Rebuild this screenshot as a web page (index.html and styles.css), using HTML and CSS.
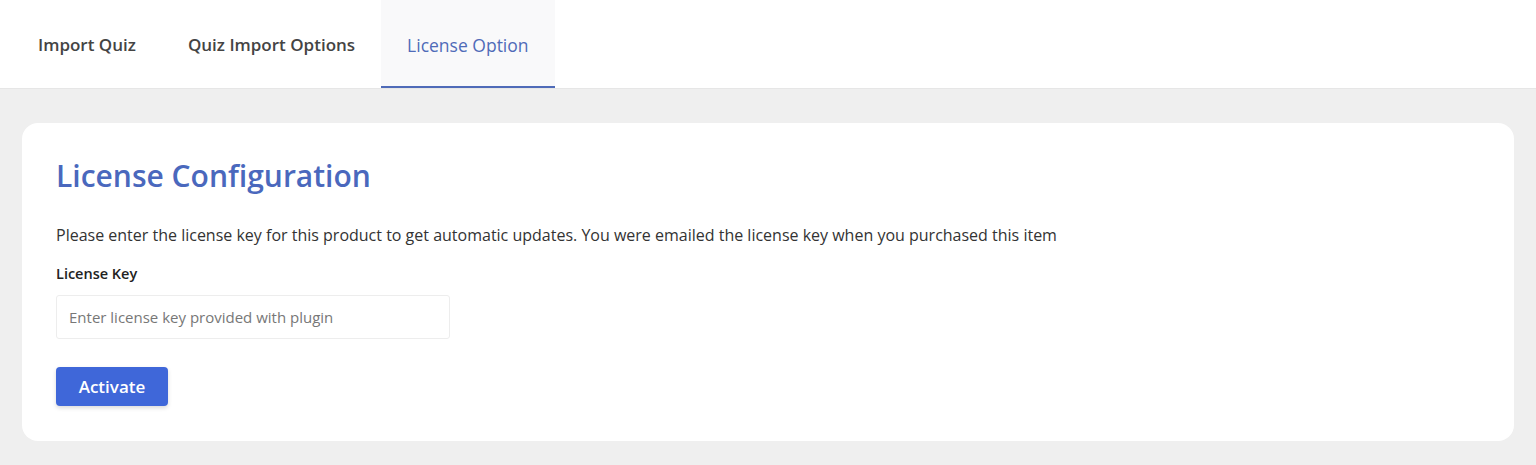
FILE: index.html
```html
<!DOCTYPE html>
<html lang="en">
<head>
  <meta charset="UTF-8">
  <meta name="viewport" content="width=device-width, initial-scale=1.0">
  <title>License Option</title>
  <link rel="stylesheet" href="styles.css">
</head>
<body>
  <nav class="tabs">
    <a class="tab" href="#">Import Quiz</a>
    <a class="tab" href="#">Quiz Import Options</a>
    <a class="tab active" href="#">License Option</a>
  </nav>

  <main class="page">
    <section class="card">
      <h1>License Configuration</h1>
      <p class="intro">Please enter the license key for this product to get automatic updates. You were emailed the license key when you purchased this item</p>
      <form class="license-form">
        <label for="license-key">License Key</label>
        <input type="text" id="license-key" placeholder="Enter license key provided with plugin">
        <button type="submit">Activate</button>
      </form>
    </section>
  </main>
</body>
</html>
```

FILE: styles.css
```css
body {
  margin: 0;
  font-family: "Open Sans", "Noto Sans", Arial, sans-serif;
  background-color: #efefef;
  color: #333;
}

.tabs {
  display: flex;
  height: 89px;
  padding-left: 12px;
  background: #fff;
  border-bottom: 1px solid #e6e6e6;
  box-sizing: border-box;
}

.tab {
  display: flex;
  align-items: center;
  padding: 3px 26px 0;
  font-size: 17px;
  font-weight: 600;
  color: #444;
  text-decoration: none;
  border-bottom: 2px solid transparent;
}

.tab.active {
  color: #4f6bb8;
  font-weight: 400;
  font-size: 17.5px;
  background: #f9f9fa;
  border-bottom-color: #4f6bb8;
}

.page {
  padding: 34px 22px 24px;
}

.card {
  background: #fff;
  border-radius: 16px;
  padding: 32px 34px 35px;
}

h1 {
  margin: 0 0 28px;
  font-size: 30px;
  font-weight: 600;
  color: #4a68bd;
}

.intro {
  margin: 0 0 18px;
  font-size: 16px;
  color: #333;
}

.license-form {
  display: flex;
  flex-direction: column;
  align-items: flex-start;
}

label {
  font-size: 14.5px;
  font-weight: 600;
  color: #222;
  margin-bottom: 12px;
}

input {
  width: 394px;
  height: 44px;
  box-sizing: border-box;
  padding: 0 12px;
  border: 1px solid #ededed;
  border-radius: 3px;
  font-family: inherit;
  font-size: 15px;
  margin-bottom: 28px;
}

input::placeholder {
  color: #777;
}

button {
  width: 112px;
  height: 39px;
  background-color: #3f67d9;
  color: #fff;
  border: none;
  border-radius: 4px;
  font-family: inherit;
  font-size: 17px;
  font-weight: 600;
  cursor: pointer;
  box-shadow: 0 2px 4px rgba(0, 0, 0, 0.15);
}
```
